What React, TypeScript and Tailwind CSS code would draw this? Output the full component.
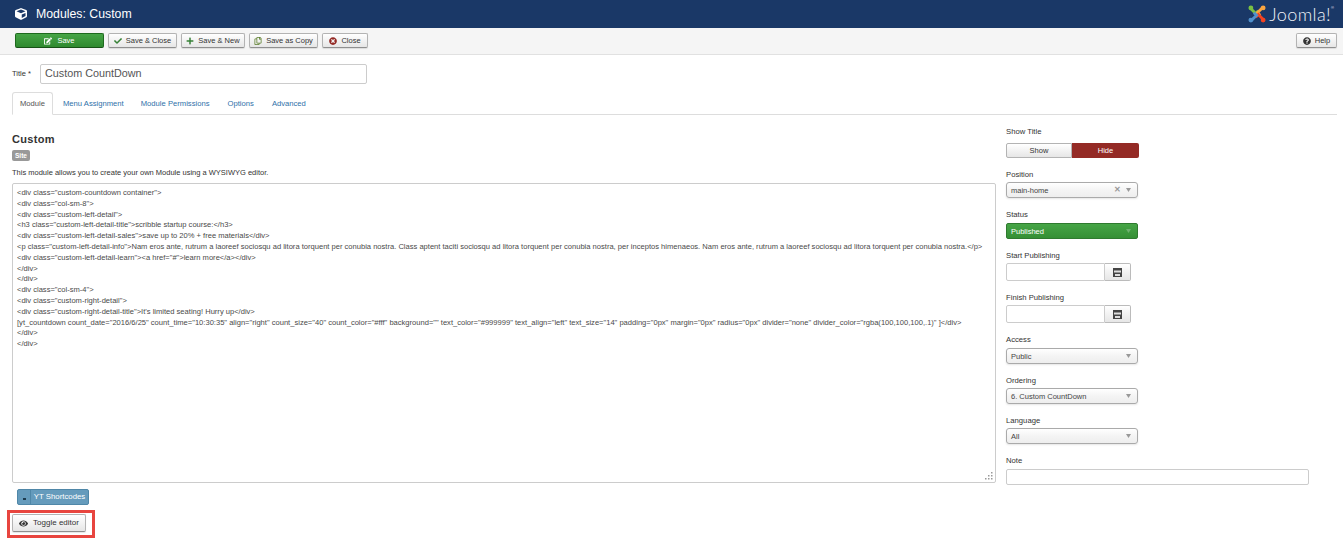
import React from "react";
import { FaCheck, FaPlus, FaRegCopy, FaEye, FaQuestionCircle, FaTimesCircle, FaEdit, FaCube } from "react-icons/fa";

const Btn = ({ icon, children, className = "" }: { icon: React.ReactNode; children: React.ReactNode; className?: string }) => (
  <div className={`h-[15px] flex items-center justify-center gap-[4px] rounded-[2px] border border-[#b3b3b3] border-b-[#8f8f8f] bg-gradient-to-b from-white to-[#e6e6e6] text-[7.5px] text-[#333333] shadow-[0_1px_1px_rgba(0,0,0,0.1)] ${className}`}>
    {icon}
    <span>{children}</span>
  </div>
);

const Label = ({ children, className = "" }: { children: React.ReactNode; className?: string }) => (
  <div className={`text-[7.7px] leading-[10px] text-[#333333] ${className}`}>{children}</div>
);

const Caret = ({ color = "#999999" }: { color?: string }) => (
  <svg width="5" height="4" viewBox="0 0 5 4" className="ml-[5px]"><path d="M0 0h5L2.5 4z" fill={color} /></svg>
);

const Select = ({ value, clear = false, className = "" }: { value: string; clear?: boolean; className?: string }) => (
  <div className={`w-[132px] h-[16px] flex items-center rounded-[3px] border border-[#aaaaaa] bg-gradient-to-b from-white via-[#f4f4f4] to-[#eeeeee] pl-[4px] pr-[6px] text-[7.5px] text-[#444444] shadow-[0_1px_2px_rgba(0,0,0,0.1)] ${className}`}>
    <span className="flex-1 pt-[1px]">{value}</span>
    {clear && <span className="text-[#999999] text-[8px] leading-none font-bold">✕</span>}
    <Caret />
  </div>
);

const Cal = () => (
  <svg width="9" height="9" viewBox="0 0 9 9"><rect width="9" height="9" fill="#444444" /><rect x="1" y="2.5" width="7" height="2" fill="#dddddd" /><rect x="2" y="6" width="5" height="2" fill="#dddddd" /></svg>
);

const DateField = () => (
  <div className="mt-[2px] flex w-[125px] h-[18px]">
    <div className="flex-1 bg-white border border-[#cccccc] rounded-l-[2px]" />
    <div className="w-[26px] flex items-center justify-center border border-l-0 border-[#bbbbbb] rounded-r-[2px] bg-gradient-to-b from-white to-[#e6e6e6]"><Cal /></div>
  </div>
);

const code = [
  '<div class="custom-countdown container">',
  '<div class="col-sm-8">',
  '<div class="custom-left-detail">',
  '<h3 class="custom-left-detail-title">scribble startup course:</h3>',
  '<div class="custom-left-detail-sales">save up to 20% + free materials</div>',
  '<p class="custom-left-detail-info">Nam eros ante, rutrum a laoreef sociosqu ad litora torquent per conubia nostra. Class aptent taciti sociosqu ad litora torquent per conubia nostra, per inceptos himenaeos. Nam eros ante, rutrum a laoreef sociosqu ad litora torquent per conubia nostra.</p>',
  '<div class="custom-left-detail-learn"><a href="#">learn more</a></div>',
  "</div>",
  "</div>",
  '<div class="col-sm-4">',
  '<div class="custom-right-detail">',
  "<div class=\"custom-right-detail-title\">It's limited seating! Hurry up</div>",
  '[yt_countdown count_date="2016/6/25" count_time="10:30:35" align="right" count_size="40" count_color="#fff" background="" text_color="#999999" text_align="left" text_size="14" padding="0px" margin="0px" radius="0px" divider="none" divider_color="rgba(100,100,100,.1)" ]</div>',
  "</div>",
  "</div>",
];

export default function App() {
  return (
    <div className="w-[1343px] h-[553px] overflow-hidden bg-white font-['Liberation_Sans',sans-serif] text-[#333333]">
      <header className="h-[28px] bg-[#1a3867] flex items-center pl-[15px] pr-[9px] text-white">
        <FaCube className="w-[12px] h-[12px]" />
        <span className="ml-[9px] text-[12.3px]">Modules: Custom</span>
        <div className="ml-auto flex items-center">
          <svg width="18" height="18" viewBox="0 0 20 20">
            <path d="M3 4 L8.5 9.5 L11.5 6.5" fill="none" stroke="#7ac143" strokeWidth="3.2" />
            <path d="M16 3 L10.5 8.5 L13.5 11.5" fill="none" stroke="#f9a541" strokeWidth="3.2" />
            <path d="M17 16 L11.5 10.5 L8.5 13.5" fill="none" stroke="#f44321" strokeWidth="3.2" />
            <path d="M4 17 L9.5 11.5 L6.5 8.5" fill="none" stroke="#5091cd" strokeWidth="3.2" />
            <circle cx="3.2" cy="3.2" r="2.7" fill="#7ac143" />
            <circle cx="16.8" cy="3.2" r="2.7" fill="#f9a541" />
            <circle cx="3.2" cy="16.8" r="2.7" fill="#5091cd" />
            <circle cx="16.8" cy="16.8" r="2.7" fill="#f44321" />
          </svg>
          <span className="ml-[3px] text-[18px] leading-none font-['Lato',sans-serif] font-light tracking-[0.4px] text-[#f0f3f7]">Joomla!</span>
          <span className="self-start mt-[1px] text-[4px] leading-none text-[#f0f3f7]">®</span>
        </div>
      </header>

      <div className="h-[27px] bg-[#f5f5f5] border-b border-[#e1e1e1] flex items-center pl-[15px] pr-[6px] pb-[1px]">
        <div className="w-[89px] h-[15px] flex items-center justify-center gap-[5px] rounded-[2px] border border-[#1e6a1e] border-b-[#175217] bg-gradient-to-b from-[#46a546] to-[#2f8a2f] text-[7.5px] text-white">
          <FaEdit className="w-[8px] h-[8px]" />
          <span>Save</span>
        </div>
        <Btn className="ml-[4px] w-[69px]" icon={<FaCheck className="w-[8px] h-[8px] text-[#378137]" />}>Save &amp; Close</Btn>
        <Btn className="ml-[4px] w-[64px]" icon={<FaPlus className="w-[8px] h-[8px] text-[#378137]" />}>Save &amp; New</Btn>
        <Btn className="ml-[4px] w-[69px]" icon={<FaRegCopy className="w-[8px] h-[8px] text-[#5a7d2a]" />}>Save as Copy</Btn>
        <Btn className="ml-[4px] w-[46px]" icon={<FaTimesCircle className="w-[8px] h-[8px] text-[#942a25]" />}>Close</Btn>
        <Btn className="ml-auto w-[41px]" icon={<FaQuestionCircle className="w-[8px] h-[8px] text-[#333333]" />}>Help</Btn>
      </div>

      <main className="pl-[12px] pr-[6px]">
        <div className="flex items-center pt-[9px]">
          <span className="w-[28px] text-[7.5px]">Title *</span>
          <div className="w-[327px] h-[20px] flex items-center rounded-[2px] border border-[#cccccc] pl-[4px] pb-[1px] text-[10.8px] text-[#555555]">Custom CountDown</div>
        </div>

        <nav className="mt-[8px] h-[23px] flex border-b border-[#dddddd] text-[7.65px] text-[#3071a9]">
          <div className="w-[41px] h-[23px] pt-[1px] flex items-center justify-center border border-b-white border-[#dddddd] rounded-t-[3px] bg-white text-[#555555]">Module</div>
          <div className="ml-[10px] pt-[1px] flex items-center">Menu Assignment</div>
          <div className="ml-[17px] pt-[1px] flex items-center">Module Permissions</div>
          <div className="ml-[18px] pt-[1px] flex items-center">Options</div>
          <div className="ml-[18px] pt-[1px] flex items-center">Advanced</div>
        </nav>

        <div className="flex">
          <section className="w-[984px]">
            <h2 className="mt-[17px] text-[11px] leading-[14px] font-bold tracking-[0.3px] text-[#333333]">Custom</h2>
            <div className="mt-[4px] w-[18px] h-[11px] rounded-[2px] bg-[#999999] text-white text-[6.5px] font-bold flex items-center justify-center">Site</div>
            <p className="mt-[7px] text-[7.5px] leading-[10px]">This module allows you to create your own Module using a WYSIWYG editor.</p>
            <div className="relative mt-[5px] h-[300px] rounded-[2px] border border-[#cccccc] pl-[4px] pt-[4px] text-[7.57px] leading-[10.8px] text-[#4a4a4a] whitespace-nowrap">
              {code.map((l, i) => <div key={i}>{l}</div>)}
              <svg width="8" height="8" viewBox="0 0 8 8" className="absolute right-[2px] bottom-[2px]">
                <g fill="#999999"><rect x="6" y="0" width="1.5" height="1.5" /><rect x="3" y="3" width="1.5" height="1.5" /><rect x="6" y="3" width="1.5" height="1.5" /><rect x="0" y="6" width="1.5" height="1.5" /><rect x="3" y="6" width="1.5" height="1.5" /><rect x="6" y="6" width="1.5" height="1.5" /></g>
              </svg>
            </div>
            <div className="mt-[6px] ml-[5px] w-[72px] h-[16px] flex rounded-[2px] border border-[#4f87a8] bg-[#659bbc] text-[7.8px] text-white">
              <div className="w-[13px] flex items-end justify-center pb-[4px] border-r border-[#4f87a8]"><div className="w-[3px] h-[2px] bg-[#1d3c50]" /></div>
              <div className="flex-1 flex items-center justify-center">YT Shortcodes</div>
            </div>
            <div className="mt-[5px] -ml-[5px] w-[88px] h-[28px] border-[3px] border-[#e8453f] flex items-center pl-[2px] pb-[2px]">
              <Btn className="w-[74px] !h-[18px] !gap-[5px] !text-[8px]" icon={<FaEye className="w-[9px] h-[9px] text-[#333333]" />}>Toggle editor</Btn>
            </div>
          </section>

          <aside className="ml-[10px] pt-[12px] w-[303px]">
            <Label>Show Title</Label>
            <div className="mt-[6px] w-[133px] h-[15px] flex text-[7.5px]">
              <div className="w-[66px] flex items-center justify-center rounded-l-[2px] border border-[#b3b3b3] bg-gradient-to-b from-white to-[#e6e6e6]">Show</div>
              <div className="flex-1 flex items-center justify-center rounded-r-[2px] bg-[#942a25] text-white">Hide</div>
            </div>
            <Label className="mt-[12px]">Position</Label>
            <Select className="mt-[2px]" value="main-home" clear />
            <Label className="mt-[12px]">Status</Label>
            <div className="mt-[3px] w-[132px] h-[16px] flex items-center rounded-[2px] border border-[#2f7a2f] bg-gradient-to-b from-[#46a546] to-[#358f35] pl-[4px] pr-[6px] text-[7.5px] text-white">
              <span className="flex-1 pt-[1px]">Published</span>
              <Caret color="#6fb06f" />
            </div>
            <Label className="mt-[12px]">Start Publishing</Label>
            <DateField />
            <Label className="mt-[12px]">Finish Publishing</Label>
            <DateField />
            <Label className="mt-[12px]">Access</Label>
            <Select className="mt-[3px]" value="Public" />
            <Label className="mt-[12px]">Ordering</Label>
            <Select className="mt-[2px]" value="6. Custom CountDown" />
            <Label className="mt-[12px]">Language</Label>
            <Select className="mt-[2px]" value="All" />
            <Label className="mt-[12px]">Note</Label>
            <div className="mt-[3px] w-[303px] h-[16px] rounded-[2px] border border-[#cccccc]" />
          </aside>
        </div>
      </main>
    </div>
  );
}
